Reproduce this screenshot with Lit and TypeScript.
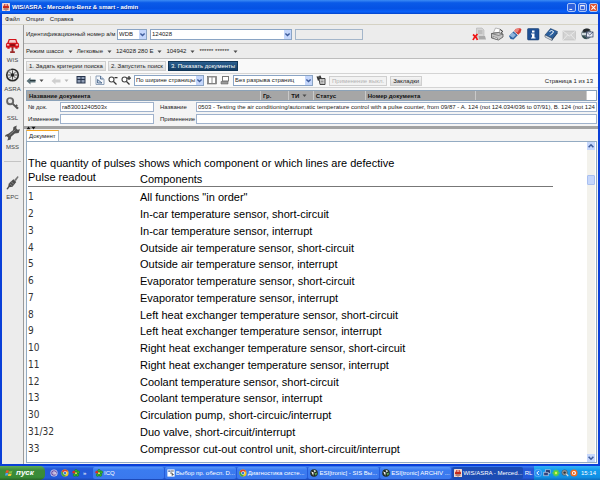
import { LitElement, html, svg, css, nothing, TemplateResult } from "lit";
import { customElement, property } from "lit/decorators.js";
import { classMap } from "lit/directives/class-map.js";

const G = (box: string, body: TemplateResult) => ({ box, body });

const icons: Record<string, { box: string; body: TemplateResult }> = {
  app: G("0 0 16 16", svg`<rect width="16" height="16" rx="1" fill="#f3d9cf"/><path d="M3 6l2-4h6l2 4 1 1v3H2V7z" fill="#c42a1c"/><path d="M5 5l1-2h4l1 2z" fill="#fff"/><path d="M3 11h3v2H3zM10 11h3v2h-3zM7 10h2v5H7z" fill="#7a2a20"/>`),
  car: G("0 0 32 32", svg`<path d="M8 1h16l3 8 3 2v8h-3v3h-5v-3H10v3H5v-3H2v-8l3-2z" fill="#d3131a"/><path d="M10 3h12l2 6H8z" fill="#f4c9c9"/><path d="M4 12h5v3H4zM23 12h5v3h-5z" fill="#ffe9e4"/><path d="M11 12h10v4H11z" fill="#8d0d12"/><path d="M14 18h4v9h3v4H11v-4h3z" fill="#9c2a2a"/>`),
  wheel: G("0 0 32 32", svg`<circle cx="16" cy="16" r="14" fill="#2c2c2c"/><circle cx="16" cy="16" r="10.5" fill="#e4e4e4"/><path d="M16 6v20M6 16h20M9 9l14 14M23 9L9 23" stroke="#4a4a4a" stroke-width="2"/><circle cx="16" cy="16" r="3.5" fill="#222"/><path d="M5 10a13 13 0 0 1 8-6" stroke="#aaa" stroke-width="1.5" fill="none"/>`),
  key: G("0 0 32 32", svg`<path d="M14 13l13 13M22 22l4-4M25 26l3-3" stroke="#555" stroke-width="4"/><circle cx="11" cy="10" r="6.5" fill="#e6e6e6" stroke="#666" stroke-width="4"/><path d="M7 8l4-3" stroke="#fff" stroke-width="2"/>`),
  wrench: G("0 0 32 32", svg`<path d="M1 20l7-3 9-7 1-7 7-3-1 6 3 3 5-1-3 8-8 1-8 7-1 6-7 2 2-6-3-3-4 1z" fill="#505050"/><path d="M9 21L22 9" stroke="#999" stroke-width="1.5"/>`),
  plug: G("0 0 32 32", svg`<path d="M27 1l2 2-6 9-3-3z" fill="#777"/><path d="M18 8l6 6-8 10-7 1-3 5-3-1 4-6 1-6z" fill="#4c4c4c"/><path d="M13 13l6 6M10 17l5 5" stroke="#a5a5a5" stroke-width="1.5"/>`),
  docx: G("0 0 28 28", svg`<path d="M9 2h11l4 4v14H9z" fill="#d4d4d4" stroke="#aaa"/><path d="M12 8h9M12 12h9" stroke="#999" stroke-width="1.5"/><path d="M14 18h12l2 7H13z" fill="#a9a9a9"/><path d="M2 15c4 3 7 6 9 11M11 14c-4 4-7 7-9 12" stroke="#f01515" stroke-width="3.5" fill="none"/>`),
  printer: G("0 0 28 28", svg`<path d="M11 2l9 2-2 8-11-1z" fill="#fff" stroke="#777"/><path d="M3 13l14-2 9 3v6l-9 6-14-4z" fill="#c5c5c5" stroke="#444" stroke-width="1.4"/><path d="M3 13l14 4 9-3" stroke="#444" fill="none"/><path d="M6 19l9 3v3l-9-3z" fill="#fff" stroke="#555"/><path d="M20 5l5 3-2 4" fill="none" stroke="#333" stroke-width="2"/>`),
  eraser: G("0 0 28 28", svg`<path d="M15 4l9-2 3 3-2 6-5 5-8-7z" fill="#d43d35"/><path d="M2 18L12 8l8 8-9 9-6-1z" fill="#2e64a4"/><path d="M3 17l6-6 7 5-6 6z" fill="#8fb4dc"/><path d="M12 9l3-5 9-2-5 9z" fill="#e9837c"/><path d="M11 8l9 8" stroke="#fff" stroke-width="1.5"/>`),
  info: G("0 0 28 28", svg`<rect x="3" y="3" width="23" height="23" rx="2" fill="#1d4f94" stroke="#123766"/><path d="M12 7h5v4h-5zM10 13h7v8h2v2h-9v-2h2v-6h-2z" fill="#fff"/>`),
  book: G("0 0 28 28", svg`<path d="M2 16L13 3l14 6-11 14z" fill="#2a5f9e" stroke="#16365e"/><path d="M2 16l14 7v4L2 20z" fill="#e5ebf2" stroke="#234" /><path d="M16 23L27 9v4L16 27z" fill="#1a406f"/><path d="M11 9l4-2 4 2-2 4-4 2M12 17l1 1" stroke="#fff" stroke-width="2" fill="none"/>`),
  mail: G("0 0 28 28", svg`<rect x="2" y="8" width="25" height="18" fill="#d2d2d2" stroke="#b5b5b5"/><path d="M2 8l12.500 10L27 8M2 26l9-10M27 26l-9-10" stroke="#eee" stroke-width="1.600" fill="none"/>`),
  globe: G("0 0 28 28", svg`<circle cx="13" cy="14" r="10.500" fill="#6d7d84"/><path d="M6 6c6-5 13-3 15 0l-6 3-8 2z" fill="#24292c"/><path d="M4 17c5 2 8 1 10 7-5 1-9-3-10-7z" fill="#2d4a4c"/><path d="M4 12h8v4H4z" fill="#cfd9dc"/><rect x="13" y="10" width="13" height="10" fill="#e6eaf4" stroke="#33405e" stroke-width="1.400"/><path d="M13 10l6.500 6L26 10" stroke="#33405e" stroke-width="1.400" fill="none"/>`),
  back: G("0 0 20 20", svg`<path d="M1 10l8-7v4h10v6H9v4z" fill="#5b7178"/><path d="M8 9h11" stroke="#27383d" stroke-width="2"/>`),
  forward: G("0 0 20 20", svg`<path d="M1 10l8-7v4h10v6H9v4z" fill="#cfcfcf"/>`),
  pages: G("0 0 20 20", svg`<rect x="1" y="2" width="18" height="15" fill="#26344d"/><path d="M3 4h6v4H3zM11 4h6v4h-6zM3 10h6v5H3zM11 10h6v5h-6z" fill="#8f9db5"/>`),
  fit: G("0 0 20 20", svg`<path d="M2 2h9l7 7v10H2z" fill="#f4f7fb" stroke="#6f87a5" stroke-width="1.500"/><path d="M5 16V9l9 7zM11 2v6h6" fill="#c8d6e8" stroke="#38577e" stroke-width="1.500"/>`),
  zoomout: G("0 0 20 20", svg`<circle cx="7" cy="9" r="5" fill="#fff" stroke="#444" stroke-width="2.200"/><path d="M11 13l6 6M13 5h6" stroke="#333" stroke-width="2.500"/>`),
  zoomin: G("0 0 20 20", svg`<circle cx="7" cy="9" r="5" fill="#fff" stroke="#444" stroke-width="2.200"/><path d="M11 13l6 6M12 6h8M16 2v8" stroke="#333" stroke-width="2.500"/>`),
  layout: G("0 0 20 20", svg`<rect x="1" y="3" width="18" height="15" fill="#8f8f8f" stroke="#555"/><path d="M4 5h5v11H4zM11 5h5v11h-5z" fill="#fff"/>`),
  stack: G("0 0 20 20", svg`<path d="M4 2h14v11H4z" fill="#777"/><path d="M6 4h10v7H6z" fill="#fff"/><path d="M2 13h14v5H2z" fill="#999" stroke="#555"/>`),
  clip: G("0 0 20 20", svg`<path d="M1 3l8-2 2 5-7 6z" fill="#333"/><path d="M6 7h12v12H8z" fill="#ddd" stroke="#333" stroke-width="1.800"/><path d="M9 10h6M9 13h6M9 16h6" stroke="#666" stroke-width="1.200"/><path d="M3 3l4 1" stroke="#fff"/>`),
  flag: G("0 0 20 20", svg`<path d="M3 4c3-2 5-1 7 0L8 10c-2-1-4-1-7 0z" fill="#f0502a"/><path d="M11 5c3 1 5 1 8-1l-2 6c-3 1-5 1-8 0z" fill="#79c043"/><path d="M1 11c3-1 5-1 7 0l-2 6c-2-1-4-1-6 0z" fill="#4aa3ee"/><path d="M9 11c3 1 5 1 8 0l-2 6c-3 1-5 1-8 0z" fill="#fbca2d"/>`),
  at: G("0 0 20 20", svg`<circle cx="10" cy="10" r="9" fill="#cfd2ee"/><circle cx="10" cy="10" r="7" fill="#6a4fa8"/><circle cx="10" cy="10" r="3" fill="none" stroke="#fff" stroke-width="2"/><path d="M13 7v6l4-1" fill="none" stroke="#fff" stroke-width="1.500"/>`),
  chrome: G("0 0 20 20", svg`<circle cx="10" cy="10" r="9" fill="#f4c51d"/><path d="M2 6a9 9 0 0 1 16 0h-8l-3 6z" fill="#dd4030"/><path d="M2 6a9 9 0 0 0 8 13l3-7-5-1z" fill="#3fa648"/><circle cx="10" cy="10" r="4.500" fill="#fff"/><circle cx="10" cy="10" r="3.300" fill="#3f78d8"/>`),
  flower: G("0 0 20 20", svg`<g fill="#39b32c" stroke="#126f12"><circle cx="10" cy="4.500" r="3.500"/><circle cx="15.500" cy="8" r="3.500"/><circle cx="13.500" cy="15" r="3.500"/><circle cx="6.500" cy="15" r="3.500"/></g><circle cx="4.500" cy="8" r="3.500" fill="#dd2d20"/><circle cx="10" cy="10.500" r="2.500" fill="#f4e13b"/>`),
  bosch: G("0 0 20 20", svg`<circle cx="10" cy="10" r="9.500" fill="#222d26"/><path d="M3 6l6 3-1 8z" fill="#fff"/><path d="M9 2l7 3-5 4z" fill="#d9e6dc"/><path d="M11 11l7-2-3 8z" fill="#62b25a"/>`),
  paper: G("0 0 20 20", svg`<rect x="1" y="1" width="18" height="18" fill="#fff"/><path d="M3 4h6v3H3z" fill="#35569c"/><path d="M10 5h7M8 10h5v7M13 14h4" stroke="#333" stroke-width="2" fill="none"/>`),
  chevron: G("0 0 20 20", svg`<circle cx="10" cy="10" r="9.500" fill="#2a8df0" stroke="#9fd4ff"/><path d="M12 5l-5 5 5 5" fill="none" stroke="#fff" stroke-width="2.500"/>`),
  net: G("0 0 20 20", svg`<rect x="6" y="2" width="12" height="9" fill="#20336b" stroke="#c8d4ee" stroke-width="1.500"/><rect x="2" y="8" width="11" height="9" fill="#31427c" stroke="#d6dff2" stroke-width="1.500"/>`),
  spark: G("0 0 20 20", svg`<path d="M10 1v18M1 10h18M4 4l12 12M16 4L4 16" stroke="#63d633" stroke-width="3.500"/><circle cx="10" cy="10" r="3" fill="#d7f25c"/>`),
  sound: G("0 0 20 20", svg`<circle cx="9" cy="9" r="7" fill="#8d969e" stroke="#333"/><circle cx="9" cy="9" r="3" fill="#30363c"/><path d="M13 12l5 6" stroke="#ddd" stroke-width="3"/>`),
  guard: G("0 0 20 20", svg`<circle cx="10" cy="10" r="9" fill="#ee6a1e"/><circle cx="10" cy="10" r="5" fill="#fff"/><path d="M8 7l5 3-5 4z" fill="#d14a10"/>`),
  down: G("0 0 10 10", svg`<path d="M1 3h8L5 8z" fill="#4c4c4c"/>`),
  downgrey: G("0 0 10 10", svg`<path d="M1 3h8L5 8z" fill="#b8b8b8"/>`),
  caret: G("0 0 10 10", svg`<path d="M2 3.500l3 3 3-3" fill="none" stroke="#3e5c9c" stroke-width="2"/>`),
  caretup: G("0 0 10 10", svg`<path d="M2 6.500l3-3 3 3" fill="none" stroke="#3e5c9c" stroke-width="2"/>`),
  triup: G("0 0 10 10", svg`<path d="M0 8h10L5 1z" fill="#111"/>`),
  tridown: G("0 0 10 10", svg`<path d="M0 2h10L5 9z" fill="#111"/>`),
  min: G("0 0 10 10", svg`<path d="M2 7h4v1.500H2z" fill="#fff"/>`),
  max: G("0 0 10 10", svg`<path d="M2 2h6v6H2z" fill="none" stroke="#fff"/><path d="M2 2.500h6" stroke="#fff" stroke-width="1.500"/>`),
  close: G("0 0 10 10", svg`<path d="M2 2l6 6M8 2L2 8" stroke="#fff" stroke-width="1.600"/>`),
};

@customElement("ui-icon")
class UiIcon extends LitElement {
  @property() name = "app";
  static styles = css`
    :host { display: inline-flex; flex: none; width: 12px; height: 12px; }
    svg { width: 100%; height: 100%; }
  `;
  render() {
    const i = icons[this.name];
    return html`<svg viewBox=${i.box} aria-hidden="true">${i.body}</svg>`;
  }
}

const modules = [
  ["car", "WIS"],
  ["wheel", "ASRA"],
  ["key", "SSL"],
  ["wrench", "MSS"],
  ["plug", "EPC"],
];

const chassis = ["Режим шасси", "Легковые", "124028 280 E", "104942", "****** ******"];

const readouts = [
  ["1", 'All functions "in order"'],
  ["2", "In-car temperature sensor, short-circuit"],
  ["3", "In-car temperature sensor, interrupt"],
  ["4", "Outside air temperature sensor, short-circuit"],
  ["5", "Outside air temperature sensor, interrupt"],
  ["6", "Evaporator temperature sensor, short-circuit"],
  ["7", "Evaporator temperature sensor, interrupt"],
  ["8", "Left heat exchanger temperature sensor, short-circuit"],
  ["9", "Left heat exchanger temperature sensor, interrupt"],
  ["10", "Right heat exchanger temperature sensor, short-circuit"],
  ["11", "Right heat exchanger temperature sensor, interrupt"],
  ["12", "Coolant temperature sensor, short-circuit"],
  ["13", "Coolant temperature sensor, interrupt"],
  ["30", "Circulation pump, short-circuic/interrupt"],
  ["31/32", "Duo valve, short-circuit/interrupt"],
  ["33", "Compressor cut-out control unit, short-circuit/interrupt"],
];

const tasks = [
  ["flower", "ICQ"],
  ["paper", "Выбор пр. обесп. D..."],
  ["chrome", "Диагностика систе..."],
  ["bosch", "ESI[tronic] - SIS Вы..."],
  ["bosch", "ESI[tronic] ARCHIV ..."],
  ["app", "WIS/ASRA - Merced..."],
];

@customElement("app-root")
class AppRoot extends LitElement {
  static styles = css`
    :host {
      display: flex; flex-direction: column; min-height: 100vh; box-sizing: border-box;
      font: 6px/8px "Liberation Sans", Arial, sans-serif; color: #222; background: #0a3fd8;
    }
    * { box-sizing: border-box; }
    button, input, select { font: inherit; color: inherit; margin: 0; padding: 0; border: 0; background: none; border-radius: 0; }
    select { appearance: none; outline: 0; }
    button, label { white-space: nowrap; }
    .title {
      display: flex; align-items: center; gap: 2px; height: 14px; padding: 0 2px; color: #fff;
      font-weight: bold; background: linear-gradient(#3b8bf5, #0a5ae8 20%, #0552e4 60%, #0a62fa 85%, #0342c8);
    }
    .title h1 { flex: 1; margin: 0; font: inherit; text-shadow: 1px 1px #0a2f9a; }
    .title ui-icon { width: 8px; height: 8px; }
    .win { display: flex; width: 9px; height: 9px; border: 1px solid #a9c4f8; border-radius: 2px; background: #2f62dd; }
    .win.close { background: #e0522c; }
    .win ui-icon { width: 100%; height: 100%; }
    .window { flex: 1; display: flex; flex-direction: column; margin: 0 2px 2px; background: #ececec; }
    .menu { display: flex; gap: 6px; height: 11px; align-items: center; padding: 0 3px; border-bottom: 1px solid #d5d2c4; }
    .body { flex: 1; display: flex; min-width: 0; }
    .side { width: 22px; display: flex; flex-direction: column; align-items: center; padding-top: 13px; border-right: 1px solid #9a9a9a; }
    .module { display: flex; flex-direction: column; align-items: center; gap: 2px; height: 29px; color: #444; }
    .module ui-icon { width: 15px; height: 16px; }
    .side hr { width: 17px; margin: 7px 0 13px; border: 0; border-top: 1px solid #c4c4c4; }
    .main { flex: 1; min-width: 0; display: flex; flex-direction: column; }
    .bar { display: flex; align-items: center; padding: 0 2px; }
    .vin { height: 19px; gap: 3px; border-bottom: 1px solid #c2c2c2; padding-right: 4px; }
    .vin label { width: 88px; }
    .combo { display: grid; height: 11px; border: 1px solid #8aa4c4; background: #fff; grid-template-columns: 1fr 7px; }
    .combo select { grid-area: 1 / 1 / 2 / 3; width: 100%; height: 9px; padding-left: 1px; line-height: 9px; }
    .combo ui-icon { grid-area: 1 / 2; width: 7px; height: 9px; background: #c4d6fb; pointer-events: none; }
    .w30 { width: 30px; } .w70 { width: 70px; } .w80 { width: 80px; } .w142 { width: 142px; }
    .blank { width: 68px; height: 11px; border: 1px solid #a4b6ca; }
    .actions { margin-left: auto; display: flex; gap: 4px; }
    .actions ui-icon { width: 14px; height: 14px; }
    .actions button, .tool, .crumb { display: flex; }
    .chassis { height: 15px; gap: 4px; border-bottom: 1px solid #bdbdbd; }
    .crumb { gap: 4px; align-items: center; }
    .crumb ui-icon, .mini { width: 5px; height: 5px; }
    .steps { height: 15px; gap: 2px; background: #f9f9f9; border-bottom: 1px solid #d4d4d4; }
    .btn { height: 10px; padding: 0 2px; border: 1px solid #cfcfcf; background: linear-gradient(#f4f4f4, #dcdcdc); }
    .btn.on { color: #fff; border-color: #0f3455; background: linear-gradient(#2b5f8f, #123c63); }
    .btn:disabled { color: #b2b2b2; background: #f2f2f2; }
    .tools { height: 14px; gap: 3px; background: #f9f9f9; border-bottom: 1px solid #d4d4d4; }
    .tool { align-items: center; gap: 3px; margin-right: 4px; }
    .tools ui-icon:not(.mini) { width: 10px; height: 10px; }
    .tools .combo ui-icon:not(.mini) { width: 7px; height: 9px; }
    .sep { width: 1px; height: 10px; background: #cccccc; margin: 0 1px; }
    .page { margin-left: auto; padding-right: 3px; }
    .work { flex: 1; display: flex; flex-direction: column; padding: 2px 1px 1px 2px; background: #f4f4f4; }
    .heads { display: flex; height: 11px; border: 1px solid #8ba2b8; background: #a6a6a6; font-weight: bold; color: #111; }
    .heads span { display: flex; gap: 3px; align-items: center; padding-left: 2px; border-right: 1px solid #c9c9c9; }
    .f234 { flex: 236; } .f28 { flex: 26; } .f24 { flex: 22; } .f53 { flex: 50; } .f111 { flex: 110; }
    .heads .corner { width: 9px; background: #fff; border: 0; }
    .form { display: grid; grid-template-columns: 30px 94px 38px 1fr; gap: 2px; padding: 1px 0 1px 2px; align-items: center; }
    .form label:nth-of-type(even) { padding-left: 4px; }
    .form input { width: 100%; min-width: 0; height: 10px; border: 1px solid #9fb2cc; background: #fff; padding: 0 1px; }
    .split { height: 3px; margin: 1px -1px 0 -2px; padding-left: 2px; background: #a2a2a2; display: flex; }
    .split ui-icon { width: 5px; height: 4px; }
    .tabs { display: flex; height: 12px; align-items: flex-end; }
    .tab { height: 11px; padding: 0 2px; border: 1px solid #a5b8cc; border-top: 1px solid #f5a623; border-bottom: 0; background: #fff; }
    .doc { flex: 1; display: flex; border: 1px solid #93abc2; background: #fff; color: #000; }
    .text { flex: 1; padding: 14px 0 0 1px; font-size: 11px; line-height: 14px; }
    .text h2 { margin: 0; font: inherit; }
    table { border-collapse: collapse; width: 94%; table-layout: fixed; }
    .codes { height: 268px; margin-top: 2px; line-height: 12px; }
    th, td { padding: 0; text-align: left; font-weight: normal; vertical-align: middle; }
    thead th { height: 16px; border-bottom: 1px solid #777; vertical-align: top; }
    thead th:last-child { padding-top: 2px; }
    .code { width: 112px; }
    tbody .code { font-family: "DejaVu Sans Condensed", "DejaVu Sans", sans-serif; font-size: 10px; color: #333; }
    .scroll { width: 8px; margin-right: 1px; display: flex; flex-direction: column; background: #f3f2ec; }
    .scroll button { display: flex; height: 8px; background: #c6d7fb; }
    .scroll ui-icon { width: 8px; height: 8px; }
    .thumb { height: 10px; margin-top: 25px; border: 1px solid #a9c0f0; border-radius: 1px; background: #c6d7fb; }
    .room { flex: 1; }
    .task { display: flex; height: 14px; align-items: center; color: #fff; background: linear-gradient(#3a7ef0, #2459d8 20%, #245bdb 85%, #1a45ae); }
    .start {
      display: flex; align-items: center; gap: 3px; width: 45px; height: 14px; padding-left: 5px; border-radius: 0 5px 5px 0;
      font-style: italic; font-weight: bold; font-size: 8px; background: linear-gradient(#5eac56, #3c8a3a 30%, #398c36 80%, #286528);
    }
    .start ui-icon { width: 9px; height: 9px; }
    .quick { display: flex; gap: 3px; width: 48px; padding-left: 5px; }
    .task ui-icon { width: 8px; height: 8px; }
    .apps { flex: 1; display: flex; min-width: 0; gap: 1px; }
    .apps button { flex: 1; display: flex; align-items: center; gap: 1px; min-width: 0; overflow: hidden; height: 12px; padding-left: 2px; border-radius: 2px; background: linear-gradient(#5a97fa, #3b7cf0 25%, #3a78ee); }
    .apps .on { background: #1c4cb4; }
    .lang { width: 11px; text-align: center; }
    .tray { display: flex; align-items: center; gap: 1px; height: 14px; padding-right: 4px; background: linear-gradient(#35b3f5, #129bee 30%, #1190e4 80%, #0c6fc0); }
    .tray ui-icon { width: 8px; height: 8px; }
    .tray time { margin-left: 2px; }
  `;

  combo(label: string, value: string, cls: string) {
    return html`<span class="combo ${cls}"><select aria-label=${label}><option>${value}</option></select><ui-icon name="caret"></ui-icon></span>`;
  }

  tool(name: string, label: string) {
    return html`<button aria-label=${label}><ui-icon name=${name}></ui-icon></button>`;
  }

  render() {
    return html`
      <header class="title">
        <ui-icon name="app"></ui-icon>
        <h1>WIS/ASRA - Mercedes-Benz &amp; smart - admin</h1>
        <button class="win" aria-label="Свернуть"><ui-icon name="min"></ui-icon></button>
        <button class="win" aria-label="Развернуть"><ui-icon name="max"></ui-icon></button>
        <button class="win close" aria-label="Закрыть"><ui-icon name="close"></ui-icon></button>
      </header>
      <div class="window">
        <nav class="menu"><button>Файл</button><button>Опции</button><button>Справка</button></nav>
        <div class="body">
          <nav class="side">
            ${modules.map(([icon, name]) => html`${name === "EPC" ? html`<hr />` : nothing}
              <button class="module"><ui-icon name=${icon}></ui-icon>${name}</button>`)}
          </nav>
          <main class="main">
            <div class="bar vin">
              <label for="vin">Идентификационный номер а/м</label>
              ${this.combo("Изготовитель", "WDB", "w30")}
              <span class="combo w142"><select id="vin"><option>124028</option></select><ui-icon name="caret"></ui-icon></span>
              <input class="blank" aria-label="Номер" readonly />
              <div class="actions">
                ${["docx", "printer", "eraser", "info", "book", "mail", "globe"].map((n) => this.tool(n, n))}
              </div>
            </div>
            <div class="bar chassis">
              ${chassis.map((c) => html`<button class="crumb">${c}<ui-icon name="down"></ui-icon></button>`)}
            </div>
            <div class="bar steps">
              <button class="btn">1. Задать критерии поиска</button>
              <button class="btn">2. Запустить поиск</button>
              <button class="btn on">3. Показать документы</button>
            </div>
            <div class="bar tools">
              <button class="tool" aria-label="Назад"><ui-icon name="back"></ui-icon><ui-icon class="mini" name="down"></ui-icon></button>
              <button class="tool" aria-label="Вперёд"><ui-icon name="forward"></ui-icon><ui-icon class="mini" name="downgrey"></ui-icon></button>
              ${this.tool("pages", "Обзор")}
              <span class="sep"></span>
              ${this.tool("fit", "Размер")}${this.tool("zoomout", "Уменьшить")}${this.tool("zoomin", "Увеличить")}
              ${this.combo("Масштаб", "По ширине страницы", "w70")}
              ${this.tool("layout", "Развороты")}${this.tool("stack", "Страницы")}
              ${this.combo("Разрыв", "Без разрыва страниц", "w80")}
              ${this.tool("clip", "Применение")}
              <button class="btn" disabled>Применение выкл.</button>
              <button class="btn">Закладки</button>
              <span class="page">Страница 1 из 13</span>
            </div>
            <div class="work">
              <div class="heads">
                <span class="f234">Название документа</span><span class="f28">Гр.</span>
                <span class="f24">ТИ <ui-icon class="mini" name="down"></ui-icon></span>
                <span class="f53">Статус</span><span class="f111">Номер документа</span><span class="f111"></span>
                <span class="corner"></span>
              </div>
              <div class="form">
                <label for="no">№ док.</label><input id="no" value="ra83001240503x" />
                <label for="name">Название</label><input id="name" value="0503 - Testing the air conditioning/automatic temperature control with a pulse counter, from 09/87 - A. 124 (not 124.034/036 to 07/91), B. 124 (not 124.034/036 to 07/91)" />
                <label for="rev">Изменение</label><input id="rev" />
                <label for="use">Применение</label><input id="use" />
              </div>
              <div class="split"><ui-icon name="triup"></ui-icon><ui-icon name="tridown"></ui-icon></div>
              <div class="tabs"><button class="tab">Документ</button></div>
              <section class="doc">
                <div class="text">
                  <h2>The quantity of pulses shows which component or which lines are defective</h2>
                  <table>
                    <thead><tr><th class="code">Pulse readout</th><th>Components</th></tr></thead>
                  </table>
                  <table class="codes">
                    <tbody>${readouts.map(([c, t]) => html`<tr><td class="code">${c}</td><td>${t}</td></tr>`)}</tbody>
                  </table>
                </div>
                <div class="scroll">
                  <button aria-label="Вверх"><ui-icon name="caretup"></ui-icon></button>
                  <div class="thumb"></div><div class="room"></div>
                  <button aria-label="Вниз"><ui-icon name="caret"></ui-icon></button>
                </div>
              </section>
            </div>
          </main>
        </div>
      </div>
      <footer class="task">
        <button class="start"><ui-icon name="flag"></ui-icon>пуск</button>
        <div class="quick"><ui-icon name="at"></ui-icon><ui-icon name="chrome"></ui-icon><ui-icon name="flower"></ui-icon>»</div>
        <div class="apps">
          ${tasks.map(([i, t], n) => html`<button class=${classMap({ on: n === tasks.length - 1 })}><ui-icon name=${i}></ui-icon>${t}</button>`)}
        </div>
        <span class="lang">RL</span>
        <div class="tray">
          ${["chevron", "net", "spark", "sound", "guard"].map((n) => html`<ui-icon name=${n}></ui-icon>`)}
          <time>15:14</time>
        </div>
      </footer>
    `;
  }
}
